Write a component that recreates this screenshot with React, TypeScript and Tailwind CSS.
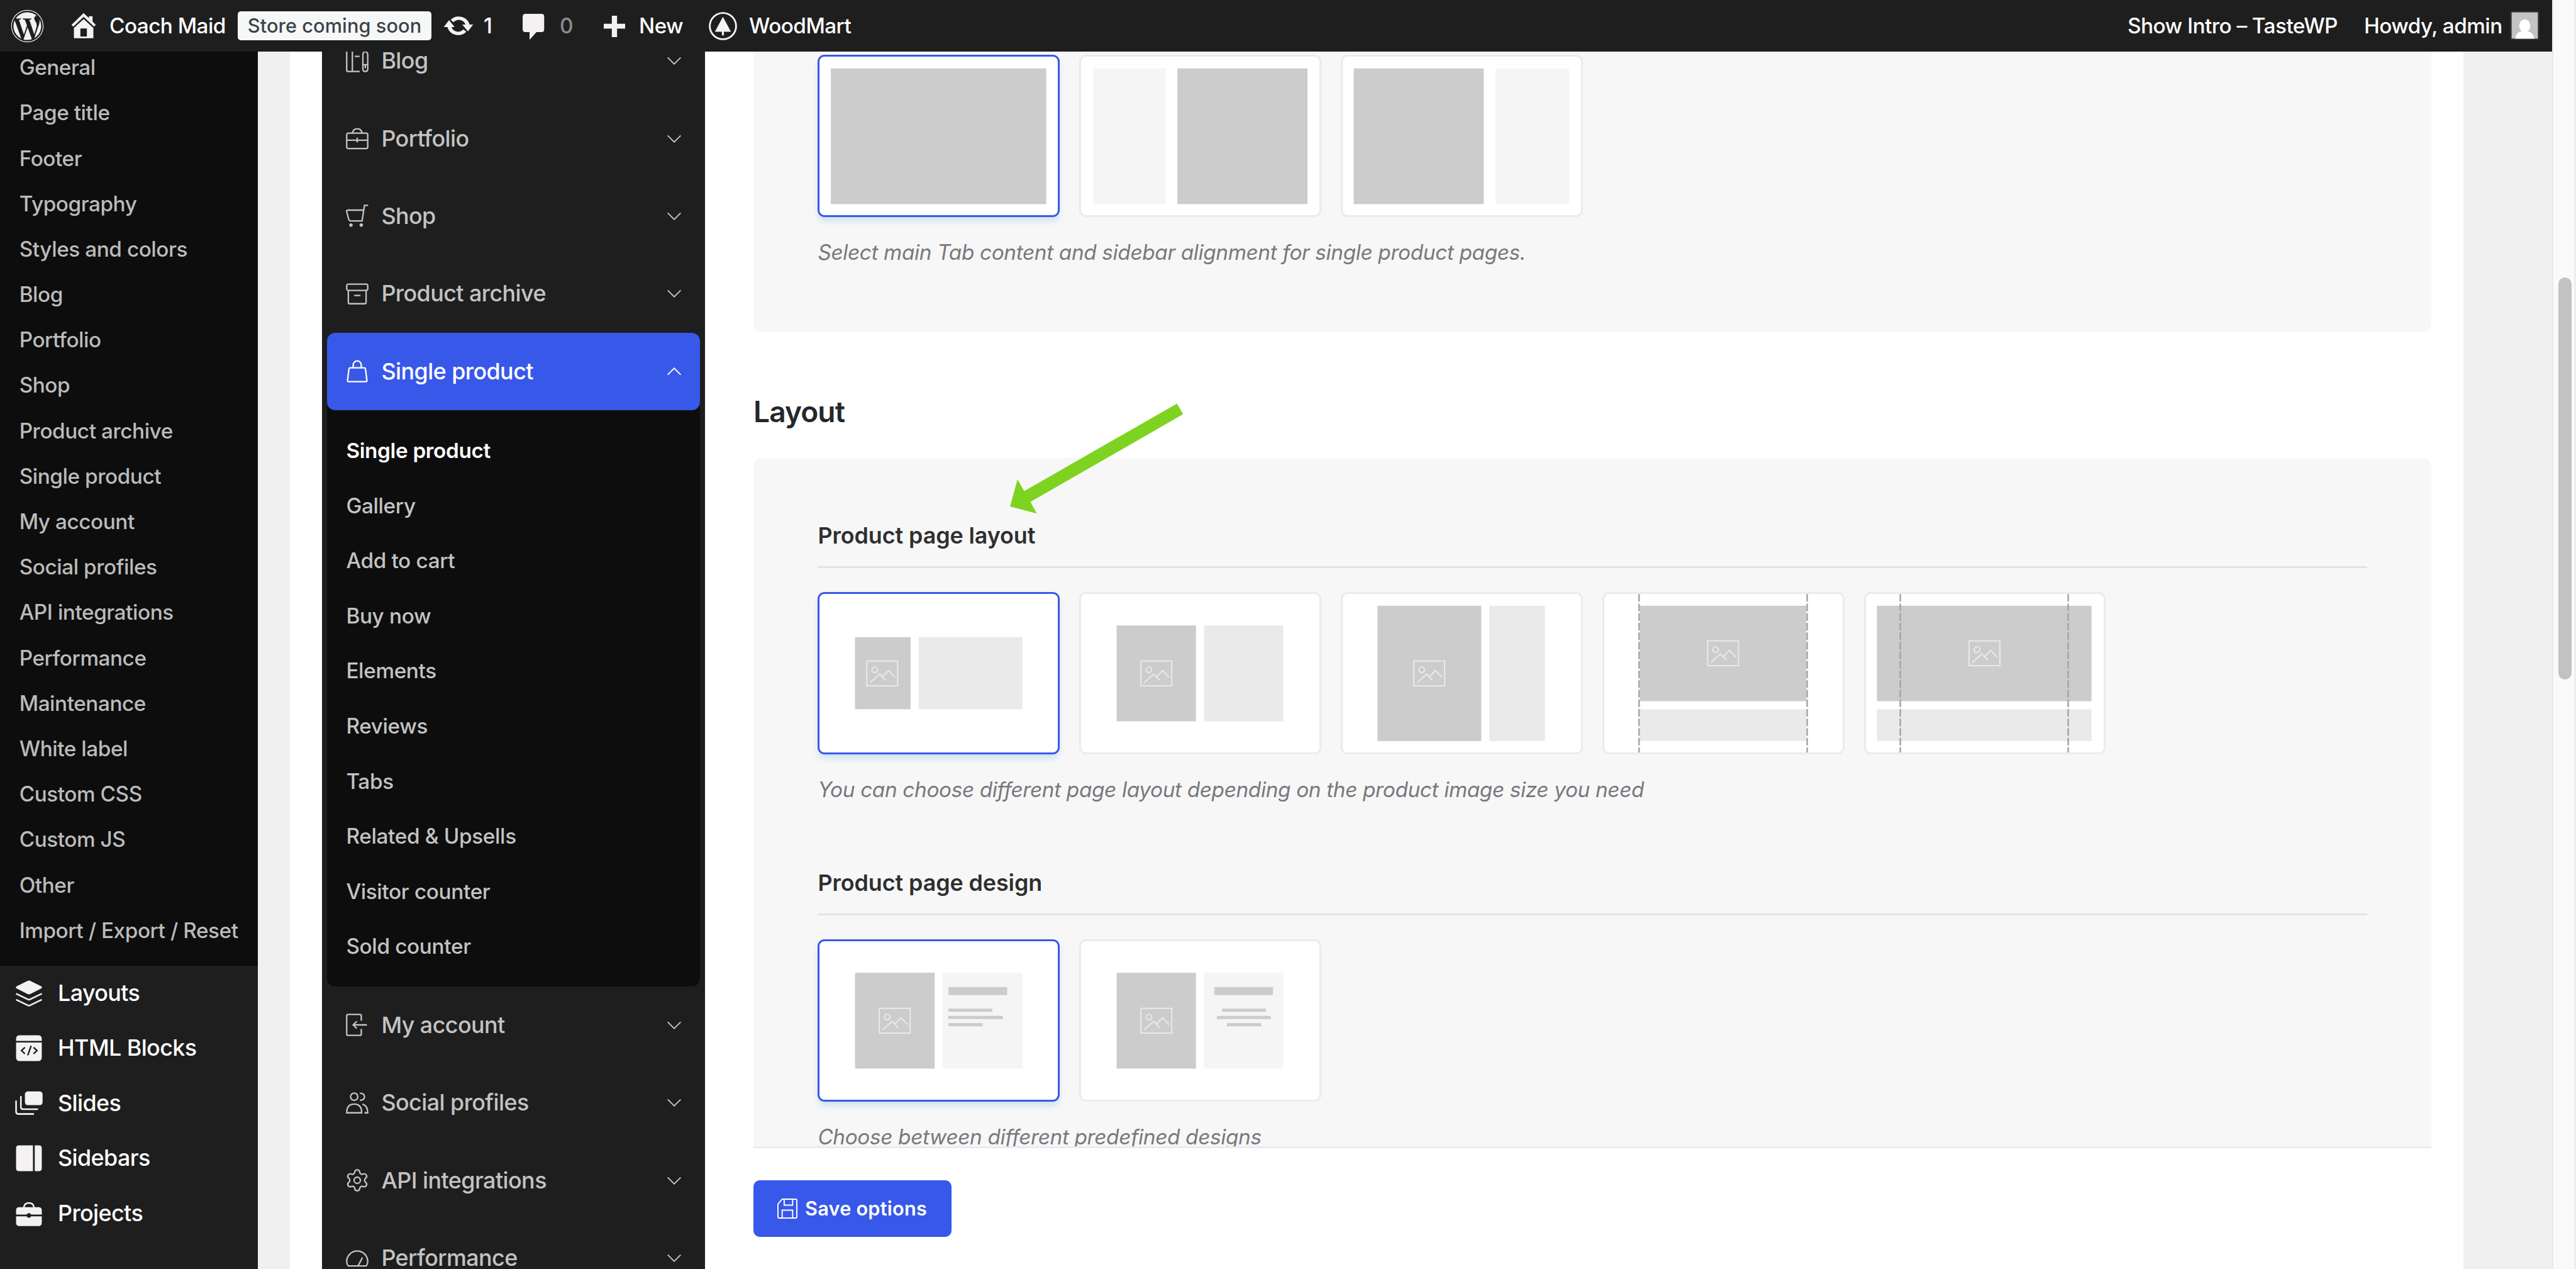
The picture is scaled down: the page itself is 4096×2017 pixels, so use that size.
import React from "react";
import { FaWordpress } from "react-icons/fa";

const submenu = [
  "General",
  "Page title",
  "Footer",
  "Typography",
  "Styles and colors",
  "Blog",
  "Portfolio",
  "Shop",
  "Product archive",
  "Single product",
  "My account",
  "Social profiles",
  "API integrations",
  "Performance",
  "Maintenance",
  "White label",
  "Custom CSS",
  "Custom JS",
  "Other",
  "Import / Export / Reset",
];

const menuItems = [
  { label: "Layouts", icon: <LayoutsIcon /> },
  { label: "HTML Blocks", icon: <HtmlBlocksIcon /> },
  { label: "Slides", icon: <SlidesIcon /> },
  { label: "Sidebars", icon: <SidebarsIcon /> },
  { label: "Projects", icon: <ProjectsIcon /> },
];

const sectionsTop = [
  { label: "Blog", icon: <BlogIcon /> },
  { label: "Portfolio", icon: <PortfolioIcon /> },
  { label: "Shop", icon: <ShopIcon /> },
  { label: "Product archive", icon: <ArchiveIcon /> },
];

const sectionsBottom = [
  { label: "My account", icon: <AccountIcon /> },
  { label: "Social profiles", icon: <SocialIcon /> },
  { label: "API integrations", icon: <ApiIcon /> },
  { label: "Performance", icon: <PerformanceIcon /> },
];

const subsections = [
  "Single product",
  "Gallery",
  "Add to cart",
  "Buy now",
  "Elements",
  "Reviews",
  "Tabs",
  "Related & Upsells",
  "Visitor counter",
  "Sold counter",
];

export default function App() {
  return (
    <div className="relative w-[4096px] h-[2017px] flex overflow-hidden bg-[#f0f0f0] font-['Inter',sans-serif] font-[450] antialiased">
      <div className="w-[4058px] flex flex-col">
        <AdminBar />
        <div className="flex-1 min-h-0 flex">
          <AdminMenu />
          <div className="w-[3456px] ml-[51px] bg-white flex">
            <ThemeSidebar />
            <ThemeOptions />
          </div>
        </div>
      </div>

      <div className="w-[38px] border-l-2 border-r-3 border-l-[#e8e8e8] border-r-[#ededed] bg-[#fafafa] pt-[441px] pl-[8px]">
        <div className="w-[21px] h-[639px] rounded-full bg-[#c2c2c2]" />
      </div>

      {/* pointer to the layout option */}
      <svg
        className="absolute left-[1600px] top-[635px] w-[288px] h-[187px]"
        viewBox="2500 992.2 450 292.2"
        fill="#7ed321"
      >
        <path d="M2924.2 1002.3L2939.5 1028.7L2560 1246.5L2576 1275.5L2509.4 1257.7L2527.8 1190.7L2544.6 1219.7Z" />
      </svg>
    </div>
  );
}

function AdminBar() {
  return (
    <header className="h-[82px] shrink-0 bg-[#1e1e1e] text-white text-[33.3px] tracking-[-0.016em] whitespace-nowrap flex items-center">
      <FaWordpress className="ml-[17px] size-[53px] text-[#f3f1f1]" />
      <svg
        className="ml-[43px] w-[40px] h-[42px]"
        viewBox="0 0 62 65"
        fill="#f3f1f1"
      >
        <path d="M31 1L44 13.5V9H53V22L61 30L56.5 34.5L31 10.5L5.5 34.5L1 30Z" />
        <path d="M31 16L55 38V63H7V38ZM23 39V59H39V39Z" fillRule="evenodd" />
      </svg>
      <span className="ml-[21px] w-[204px] pt-px">Coach Maid</span>
      <span className="w-[308px] h-[46px] rounded-[5px] bg-[#f6f7f7] text-[#3c434a] text-[30.7px] tracking-[0.003em] flex items-center justify-center">
        Store coming soon
      </span>
      <svg
        className="ml-[19px] w-[48px] h-[36px]"
        viewBox="0 0 75 56"
        fill="#f3f1f1"
      >
        <path d="M18 13A28 27 0 0 1 65 25H74L61 42L47 25H55A18 18 0 0 0 25 19Z" />
        <path d="M57 43A28 27 0 0 1 10 31H1L14 14L28 31H20A18 18 0 0 0 50 37Z" />
      </svg>
      <span className="ml-[16px] w-[62px] pt-px">1</span>
      <svg
        className="mt-[4px] w-[35px] h-[42px]"
        viewBox="0 0 54 65"
        fill="#f3f1f1"
      >
        <path d="M7 0H47Q53 0 53 7V38Q53 45 47 45H34L17 64V45H7Q0 45 0 38V7Q0 0 7 0Z" />
      </svg>
      <span className="ml-[24px] w-[70px] pt-px text-[#8c8c8c]">0</span>
      <svg
        className="mt-[2px] w-[34px] h-[34px]"
        viewBox="0 0 53 53"
        fill="#f3f1f1"
      >
        <path d="M20 0H33V20H53V32H33V53H20V32H0V20H20Z" />
      </svg>
      <span className="ml-[22px] w-[111px] pt-px">New</span>
      <svg className="w-[45px] h-[45px]" viewBox="0 0 70 70">
        <circle
          cx="35"
          cy="35"
          r="32.5"
          fill="none"
          stroke="#f3f1f1"
          strokeWidth="4.5"
        />
        <path d="M35 12L55 49H37.5V58H32.5V49H15Z" fill="#f3f1f1" />
      </svg>
      <span className="ml-[19px] pt-px">WoodMart</span>

      <div className="ml-auto flex items-center">
        <span className="w-[376px] pt-px">Show Intro – TasteWP</span>
        <span className="w-[232px] pt-px">Howdy, admin</span>
        <svg
          className="w-[47px] h-[47px] mt-[-2px] mr-[20px]"
          viewBox="0 0 72 72"
        >
          <rect width="72" height="72" fill="#2c2c2c" />
          <rect x="4" y="4" width="64" height="64" fill="#c3c3c3" />
          <ellipse cx="36" cy="37" rx="13.5" ry="16" fill="#fff" />
          <path d="M13 68Q14 52 29 50H43Q58 52 59 68Z" fill="#fff" />
        </svg>
      </div>
    </header>
  );
}

function AdminMenu() {
  return (
    <aside className="w-[410px] shrink-0 bg-[#1e1e1e] overflow-hidden">
      <ul className="-mt-[10px] pb-[19px] bg-[#0d0d0d] text-[#bbbbbb] text-[33.3px] tracking-[-0.013em] whitespace-nowrap">
        {submenu.map((item) => (
          <li key={item} className="h-[72.2px] pl-[30.7px] flex items-center">
            {item}
          </li>
        ))}
      </ul>
      <ul className="text-white text-[35.84px] tracking-[-0.016em] font-medium whitespace-nowrap">
        {menuItems.map((item) => (
          <li key={item.label} className="h-[87.55px] flex items-center">
            <div className="w-[92px] flex justify-center">{item.icon}</div>
            {item.label}
          </li>
        ))}
      </ul>
    </aside>
  );
}

function ThemeSidebar() {
  return (
    <div className="w-[609px] ml-[51px] shrink-0 bg-[#1e1e1e] overflow-hidden px-[7.7px] text-[#c3c3c3]">
      <div className="-mt-[47px]">
        {sectionsTop.map((s) => (
          <SectionRow key={s.label} label={s.label} icon={s.icon} />
        ))}
      </div>
      <div className="bg-[#0d0d0d] rounded-[13px]">
        <div className="bg-[#3858e9] rounded-[13px] text-white">
          <SectionRow label="Single product" icon={<BagIcon />} open />
        </div>
        <ul className="pt-[21.5px] pb-[18.8px] text-[33.3px] tracking-[-0.01em]">
          {subsections.map((item, i) => (
            <li
              key={item}
              className={`h-[87.55px] pl-[30.7px] flex items-center ${
                i === 0 ? "text-white font-semibold" : ""
              }`}
            >
              {item}
            </li>
          ))}
        </ul>
      </div>
      <div>
        {sectionsBottom.map((s) => (
          <SectionRow key={s.label} label={s.label} icon={s.icon} />
        ))}
      </div>
    </div>
  );
}

function SectionRow({
  label,
  icon,
  open,
}: {
  label: string;
  icon: React.ReactNode;
  open?: boolean;
}) {
  return (
    <div className="h-[123.4px] px-[30.7px] flex items-center text-[35.84px] tracking-[-0.015em] whitespace-nowrap">
      {icon}
      <span className="ml-[20px] pt-px flex-1">{label}</span>
      <svg
        className={`w-[22px] h-[13px] ${open ? "rotate-180" : ""}`}
        viewBox="0 0 34 20"
        fill="none"
        stroke="currentColor"
        strokeWidth="3"
      >
        <path d="M1 2L17 18L33 2" />
      </svg>
    </div>
  );
}

function ThemeOptions() {
  return (
    <main className="w-[2668px] ml-[77px]">
      <div className="h-[1743px] overflow-hidden border-b-3 border-[#ebebeb]">
        <section className="h-[446.4px] rounded-b-[13px] bg-[#f7f7f7] px-[102.4px] pt-[4.7px]">
          <div className="flex gap-[31px]">
            <Option active>
              <rect x="33" y="34" width="535" height="337" fill="#ccc" />
            </Option>
            <Option>
              <rect x="34" y="34" width="181" height="337" fill="#f5f5f5" />
              <rect x="244" y="34" width="323" height="337" fill="#ccc" />
            </Option>
            <Option>
              <rect x="32" y="34" width="323" height="337" fill="#ccc" />
              <rect x="384" y="34" width="183" height="337" fill="#f5f5f5" />
            </Option>
          </div>
          <Description>
            Select main Tab content and sidebar alignment for single product
            pages.
          </Description>
        </section>

        <h2 className="mt-[95.6px] h-[60px] leading-[60px] mb-[44.4px] text-[46.08px] tracking-[-0.02em] font-semibold text-[#23282d]">
          Layout
        </h2>

        <section className="h-[1300px] rounded-t-[13px] bg-[#f7f7f7] px-[102.4px] pt-[101px]">
          <FieldTitle>Product page layout</FieldTitle>
          <div className="flex gap-[31px]">
            <Option active>
              <rect x="93" y="112" width="138" height="179" fill="#ccc" />
              <rect x="251" y="112" width="258" height="179" fill="#eaeaea" />
              <Placeholder x={121} y={170} />
            </Option>
            <Option>
              <rect x="93" y="83" width="197" height="238" fill="#ccc" />
              <rect x="310" y="83" width="197" height="238" fill="#eaeaea" />
              <Placeholder x={152} y={170} />
            </Option>
            <Option>
              <rect x="91" y="34" width="258" height="336" fill="#ccc" />
              <rect x="369" y="34" width="138" height="336" fill="#eaeaea" />
              <Placeholder x={180} y={170} />
            </Option>
            <Option>
              <rect x="91" y="34" width="418" height="237" fill="#ccc" />
              <rect x="91" y="291" width="418" height="79" fill="#eaeaea" />
              <Guides left={91} right={508.5} gap="#fff" />
              <Placeholder x={260} y={120} />
            </Option>
            <Option>
              <rect x="32" y="34" width="533" height="237" fill="#ccc" />
              <rect x="32" y="291" width="533" height="79" fill="#eaeaea" />
              <Guides left={90} right={507} />
              <Placeholder x={259.5} y={120} />
            </Option>
          </div>
          <Description>
            You can choose different page layout depending on the product image
            size you need
          </Description>

          <div className="mt-[106px]">
            <FieldTitle>Product page design</FieldTitle>
          </div>
          <div className="flex gap-[31px]">
            <Option active>
              <rect x="93" y="83" width="198" height="238" fill="#ccc" />
              <rect x="311" y="83" width="198" height="238" fill="#f5f5f5" />
              <Placeholder x={152} y={170} />
              <g fill="#ccc">
                <rect x="325" y="118.5" width="146" height="20" />
                <rect x="325" y="172" width="109" height="8" />
                <rect x="325" y="190" width="135.5" height="8" />
                <rect x="325" y="208" width="85" height="8" />
              </g>
            </Option>
            <Option>
              <rect x="93" y="83" width="197" height="238" fill="#ccc" />
              <rect x="310" y="83" width="197" height="238" fill="#f5f5f5" />
              <Placeholder x={152} y={170} />
              <g fill="#ccc">
                <rect x="335.5" y="118.5" width="146" height="20" />
                <rect x="355" y="172" width="109" height="8" />
                <rect x="342" y="190" width="134" height="8" />
                <rect x="367" y="208" width="85" height="8" />
              </g>
            </Option>
          </div>
          <Description>Choose between different predefined designs</Description>
        </section>
      </div>

      <button className="mt-[51px] w-[315px] h-[90px] rounded-[10px] bg-[#3858e9] text-white text-[30.7px] tracking-[0.007em] font-semibold whitespace-nowrap flex items-center pl-[38px]">
        <SaveIcon />
        <span className="ml-[12px] pt-px">Save options</span>
      </button>
    </main>
  );
}

function FieldTitle({ children }: { children: React.ReactNode }) {
  return (
    <h3 className="h-[73.4px] leading-[44px] mb-[38px] border-b-3 border-[#e3e3e3] text-[35.84px] tracking-[-0.002em] font-semibold text-[#2f2f2f]">
      {children}
    </h3>
  );
}

function Description({ children }: { children: React.ReactNode }) {
  return (
    <p className="mt-[36px] h-[40px] leading-[40px] text-[33.3px] tracking-[-0.01em] font-normal italic text-[#77797d] whitespace-nowrap">
      {children}
    </p>
  );
}

function Option({
  active,
  children,
}: {
  active?: boolean;
  children: React.ReactNode;
}) {
  return (
    <div
      className={`w-[384.8px] h-[258.6px] rounded-[11px] border-3 bg-white ${
        active
          ? "border-[#3858e9] shadow-[0_7px_12px_-2px_rgba(20,130,200,0.22)]"
          : "border-[#ebebeb]"
      }`}
    >
      <svg
        className="block w-full h-full"
        viewBox="4.7 4.7 591.8 394.6"
        preserveAspectRatio="none"
      >
        {children}
      </svg>
    </div>
  );
}

// dashed container borders of the full width layouts
function Guides({
  left,
  right,
  gap,
}: {
  left: number;
  right: number;
  gap?: string;
}) {
  const d = `M${left} 5V400M${right} 5V400`;
  return (
    <>
      {gap && <path d={d} stroke={gap} strokeWidth="4" />}
      <path
        d={d}
        stroke="#a6a6a6"
        strokeWidth="4"
        strokeDasharray="18.8 5"
      />
    </>
  );
}

function Placeholder({ x, y }: { x: number; y: number }) {
  return (
    <g
      transform={`translate(${x} ${y})`}
      fill="none"
      stroke="#e9e9e9"
      strokeWidth="3.2"
    >
      <rect x="1.4" y="1.4" width="76.5" height="61.5" />
      <circle cx="21" cy="23" r="7" />
      <path d="M9.5 55L33.3 33.5L47.7 49.5M40 40.5L55.3 25L71.6 42" />
    </g>
  );
}

function LineIcon({ children }: { children: React.ReactNode }) {
  return (
    <svg
      className="w-[36px] h-[36px] overflow-visible"
      viewBox="0 0 56 56"
      fill="none"
      stroke="currentColor"
      strokeWidth="3.6"
    >
      {children}
    </svg>
  );
}

function BlogIcon() {
  return (
    <LineIcon>
      <path d="M2 0V51Q2 54 5 54H34M16 0V54M22 16.5H34" />
      <path d="M42 12Q43 5 48 5Q53 5 54 12V48Q54 54 48 54Q42 54 42 48ZM42 37H54M48 37V46" />
    </LineIcon>
  );
}

function PortfolioIcon() {
  return (
    <LineIcon>
      <rect x="2" y="15" width="52" height="38" rx="4" />
      <path d="M16 15Q18 4 28 4Q38 4 40 15M2 32.5H54M28 26V38" />
    </LineIcon>
  );
}

function ShopIcon() {
  return (
    <LineIcon>
      <path d="M55 2H46L40 40.5H12Q8 40.5 7 37L2 18Q1 14 5 14H43" />
      <circle cx="12.5" cy="51" r="4.3" fill="currentColor" stroke="none" />
      <circle cx="38" cy="51" r="4.3" fill="currentColor" stroke="none" />
    </LineIcon>
  );
}

function ArchiveIcon() {
  return (
    <LineIcon>
      <rect x="2" y="4" width="52" height="15.5" rx="4" />
      <path d="M6 19.5V49Q6 52.5 9.5 52.5H46.5Q50 52.5 50 49V19.5M20.5 32H36" />
    </LineIcon>
  );
}

function BagIcon() {
  return (
    <LineIcon>
      <path d="M10 19.5H46Q48 19.5 48.4 22L52 51Q52.3 54 49 54H7Q3.7 54 4 51L7.6 22Q8 19.5 10 19.5Z" />
      <path d="M18 19.5V12.5a10 10 0 0 1 20 0V19.5" />
    </LineIcon>
  );
}

function AccountIcon() {
  return (
    <LineIcon>
      <path d="M38 18V5Q38 2 35 2H5Q2 2 2 5V51Q2 54 5 54H35Q38 54 38 51V38M52 28H18M27 19L18 28L27 37" />
    </LineIcon>
  );
}

function SocialIcon() {
  return (
    <LineIcon>
      <circle cx="20.5" cy="12.7" r="9" />
      <path d="M2 52.5Q2 31 20.5 31Q39 31 39 52.5ZM34.5 4Q46 4 46 13Q46 21.5 34.5 21.5M41 31Q54 35 54 52.5H46" />
    </LineIcon>
  );
}

function ApiIcon() {
  return (
    <LineIcon>
      <g
        transform="translate(28 28) scale(2.6) translate(-12 -12)"
        strokeWidth="1.4"
      >
        <path d="M9.671 4.136a2.34 2.34 0 0 1 4.659 0 2.34 2.34 0 0 0 3.319 1.915 2.34 2.34 0 0 1 2.33 4.033 2.34 2.34 0 0 0 0 3.831 2.34 2.34 0 0 1-2.33 4.033 2.34 2.34 0 0 0-3.319 1.915 2.34 2.34 0 0 1-4.659 0 2.34 2.34 0 0 0-3.32-1.915 2.34 2.34 0 0 1-2.33-4.033 2.34 2.34 0 0 0 0-3.831A2.34 2.34 0 0 1 6.35 6.051a2.34 2.34 0 0 0 3.319-1.915" />
        <circle cx="12" cy="12" r="3" />
      </g>
    </LineIcon>
  );
}

function PerformanceIcon() {
  return (
    <LineIcon>
      <path d="M6 47Q2 42 2 36A26 26 0 0 1 54 36Q54 42 50 47ZM30 47L41 26" />
    </LineIcon>
  );
}

function SaveIcon() {
  return (
    <svg
      className="w-[32px] h-[32px]"
      viewBox="0 0 50 50"
      fill="none"
      stroke="currentColor"
      strokeWidth="3"
    >
      <path d="M12 1.5H45Q48.5 1.5 48.5 5V45Q48.5 48.5 45 48.5H5Q1.5 48.5 1.5 45V14Z" />
      <path d="M17 1.5V16.5H38V1.5M12 48.5V29H38V48.5" />
    </svg>
  );
}

function SolidIcon({ children }: { children: React.ReactNode }) {
  return (
    <svg className="w-[46px] h-[46px]" viewBox="0 0 72 72" fill="#f3f1f1">
      {children}
    </svg>
  );
}

function LayoutsIcon() {
  return (
    <SolidIcon>
      <path d="M32 5Q36 3 40 5L67 18.5Q70 21 67 23.5L40 37Q36 39 32 37L5 23.5Q2 21 5 18.5Z" />
      <path
        d="M4 36.5L34 51Q36 52 38 51L68 36.5M4 51.5L34 66Q36 67 38 66L68 51.5"
        fill="none"
        stroke="#f3f1f1"
        strokeWidth="4"
      />
    </SolidIcon>
  );
}

function HtmlBlocksIcon() {
  return (
    <SolidIcon>
      <path d="M13 4H59Q68 4 68 13V18H4V13Q4 4 13 4ZM4 22H68V59Q68 68 59 68H13Q4 68 4 59Z" />
      <path
        d="M25 35L17.5 42L25 49M48.5 35L56 42L48.5 49M41 31.5L33.5 52.5"
        fill="none"
        stroke="#1e1e1e"
        strokeWidth="3.6"
        strokeLinecap="round"
      />
    </SolidIcon>
  );
}

function SlidesIcon() {
  return (
    <SolidIcon>
      <rect x="26" y="6" width="44" height="34" rx="7" />
      <path
        d="M16 19V45Q16 50 21 50H57M4 30V56Q4 62 9 62H47"
        fill="none"
        stroke="#f3f1f1"
        strokeWidth="4"
        strokeLinecap="round"
      />
    </SolidIcon>
  );
}

function SidebarsIcon() {
  return (
    <SolidIcon>
      <path d="M11 4H46V68H11Q4 68 4 61V11Q4 4 11 4ZM50.5 4H61Q68 4 68 11V61Q68 68 61 68H50.5Z" />
    </SolidIcon>
  );
}

function ProjectsIcon() {
  return (
    <SolidIcon>
      <path
        d="M23 21Q25 9.5 36 9.5Q47 9.5 49 21"
        fill="none"
        stroke="#f3f1f1"
        strokeWidth="4"
      />
      <path d="M12 20H60Q68 20 68 28V38.5H4V28Q4 20 12 20ZM4 42.5H68V58Q68 67 60 67H12Q4 67 4 58Z" />
      <circle cx="36" cy="40.5" r="5.5" fill="#1e1e1e" />
    </SolidIcon>
  );
}
